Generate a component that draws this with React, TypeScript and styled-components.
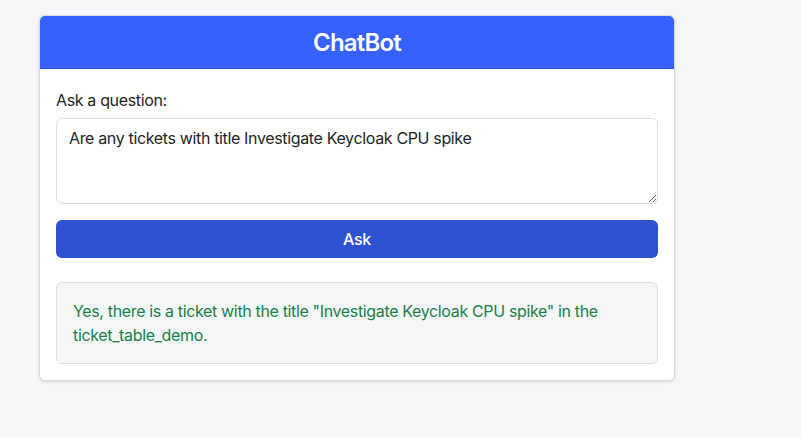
import React from "react";
import styled, { createGlobalStyle } from "styled-components";

const Global = createGlobalStyle`
  html, body { margin: 0; padding: 0; background: #f5f6f8; }
  body { font-family: Inter, "Noto Sans", sans-serif; color: #212529; }
  * { box-sizing: border-box; }
`;

const Page = styled.div`
  padding: 15px 0 0 39px;
  min-height: 437px;
`;

const Card = styled.div`
  width: 636px;
  background: #fff;
  border: 1px solid #d9dadd;
  border-radius: 6px;
  box-shadow: 0 1px 3px rgba(0, 0, 0, 0.12);
  overflow: hidden;
`;

const Header = styled.div`
  height: 53px;
  background: #3661fe;
  border-bottom: 1px solid #2d55e6;
  display: flex;
  align-items: center;
  justify-content: center;
  color: #fff;
  font-size: 24px;
  font-weight: 600;
  letter-spacing: -0.8px;
`;

const Body = styled.div`
  padding: 19px 16px 16px;
  display: flex;
  flex-direction: column;
  letter-spacing: -0.35px;
`;

const Label = styled.label`
  font-size: 16px;
  line-height: 24px;
  margin-bottom: 6px;
`;

const TextArea = styled.textarea`
  width: 100%;
  height: 86px;
  border: 1px solid #dcdde0;
  border-radius: 6px;
  padding: 7px 12px;
  font-family: inherit;
  font-size: 16px;
  line-height: 24px;
  letter-spacing: -0.35px;
  color: #212529;
  resize: vertical;
  outline: none;
`;

const AskButton = styled.button`
  margin-top: 16px;
  height: 38px;
  border: none;
  border-radius: 6px;
  background: #2e51d0;
  color: #fff;
  font-family: inherit;
  font-size: 16px;
  font-weight: 500;
  letter-spacing: -0.35px;
`;

const Answer = styled.div`
  margin-top: 24px;
  background: #f5f6f8;
  border: 1px solid #dcdde0;
  border-radius: 6px;
  padding: 16px;
  color: #1a7f48;
  font-size: 16px;
  line-height: 24px;
`;

export default function App() {
  return (
    <Page>
      <Global />
      <Card>
        <Header>ChatBot</Header>
        <Body>
          <Label>Ask a question:</Label>
          <TextArea defaultValue="Are any tickets with title Investigate Keycloak CPU spike" />
          <AskButton>Ask</AskButton>
          <Answer>
            Yes, there is a ticket with the title "Investigate Keycloak CPU spike" in the ticket_table_demo.
          </Answer>
        </Body>
      </Card>
    </Page>
  );
}
